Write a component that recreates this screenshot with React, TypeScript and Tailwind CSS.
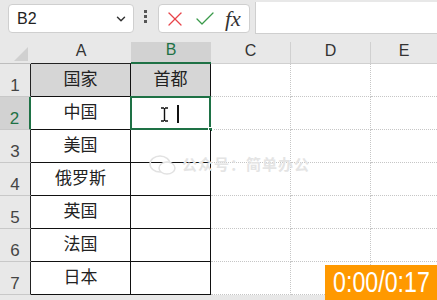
import { ChevronDown, X, Check } from "lucide-react";

const rows = [
  { n: 1, a: "国家", b: "首都", head: true },
  { n: 2, a: "中国", b: "" },
  { n: 3, a: "美国", b: "" },
  { n: 4, a: "俄罗斯", b: "" },
  { n: 5, a: "英国", b: "" },
  { n: 6, a: "法国", b: "" },
  { n: 7, a: "日本", b: "" },
];

const font = {
  fontFamily: '"Liberation Sans", "Noto Sans CJK SC", sans-serif',
};

const App = () => {
  return (
    <div
      className="relative w-[437px] h-[300px] overflow-hidden bg-[#e8e8e8] text-[#222]"
      style={font}
    >
      {/* formula bar */}
      <div className="flex h-[42px] items-start">
        <div className="ml-[8px] mt-[4px] flex h-[29px] w-[126px] items-center justify-between rounded-[4px] border border-[#cfcfcf] bg-white pl-[8px] pr-[5px]">
          <span className="text-[16px]">B2</span>
          <ChevronDown size={14} strokeWidth={2.5} className="text-[#333]" />
        </div>
        <div className="mt-[10px] ml-[10px] flex flex-col gap-[2px]">
          <div className="h-[3px] w-[3px] bg-[#555]" />
          <div className="h-[3px] w-[3px] bg-[#555]" />
          <div className="h-[3px] w-[3px] bg-[#555]" />
        </div>
        <div className="ml-[11px] mt-[4px] flex h-[29px] w-[92px] items-center gap-[6px] rounded-[4px] border border-[#cfcfcf] bg-white pl-[4px]">
          <X size={24} strokeWidth={1.3} className="text-[#e8444a]" />
          <Check size={24} strokeWidth={1.3} className="text-[#3a9a4a]" />
          <span
            className="ml-[2px] text-[22px] italic text-[#333]"
            style={{ fontFamily: '"Liberation Serif", serif' }}
          >
            fx
          </span>
        </div>
        <div className="ml-[5px] mt-[2px] h-[32px] flex-1 border-l border-b border-[#cfcfcf] bg-white" />
      </div>

      {/* column headers */}
      <div className="flex h-[22px]">
        <div className="relative w-[31px] border-b border-[#bdbdbd]">
          <svg className="absolute right-[3px] bottom-[2px]" width="14" height="14" viewBox="0 0 14 14">
            <polygon points="14,0 14,14 0,14" fill="#d0d0d0" />
          </svg>
        </div>
        <div className="flex w-[100px] items-end justify-center border-b border-[#222] text-[16px] text-[#333]">
          A
        </div>
        <div className="flex w-[80px] items-end justify-center border-b-2 border-[#1e7145] bg-[#d2d2d2] text-[16px] text-[#1e7145]">
          B
        </div>
        <div className="flex w-[80px] items-end justify-center border-r border-b border-[#d0d0d0] text-[16px] text-[#333]">
          C
        </div>
        <div className="flex w-[80px] items-end justify-center border-r border-b border-[#d0d0d0] text-[16px] text-[#333]">
          D
        </div>
        <div className="flex flex-1 items-end justify-center border-b border-[#d0d0d0] text-[16px] text-[#333]">
          E
        </div>
      </div>

      {/* rows */}
      {rows.map((r) => (
        <div key={r.n} className="flex h-[33px]">
          <div
            className={`flex w-[31px] items-end justify-center border-b border-[#c8c8c8] text-[17px] leading-[20px] ${
              r.n === 2
                ? "border-r-2 border-r-[#1e7145] bg-[#d2d2d2] text-[#1e7145]"
                : "border-r border-r-[#222] text-[#444]"
            }`}
          >
            {r.n}
          </div>
          <div
            className={`flex w-[100px] items-center justify-center border-r border-b border-[#111] text-[17px] ${
              r.head ? "bg-[#d6d6d6]" : "bg-white"
            }`}
          >
            {r.a}
          </div>
          <div
            className={`relative flex w-[80px] items-center justify-center border-r border-b border-[#111] text-[17px] ${
              r.head ? "bg-[#d6d6d6]" : "bg-white"
            }`}
          >
            {r.b}
            {r.n === 2 && (
              <>
                <div className="absolute -left-[1px] -top-[1px] -right-[1px] -bottom-[1px] border-2 border-[#1e7145]" />
                <div className="absolute -right-[3px] -bottom-[3px] h-[5px] w-[5px] border border-white bg-[#1e7145]" />
                <svg className="absolute left-[29px] top-[10px]" width="9" height="15" viewBox="0 0 9 15">
                  <path d="M1 1h3M5 1h3M4.5 1v13M1 14h3M5 14h3" stroke="#111" strokeWidth="1.4" fill="none" />
                </svg>
                <div className="absolute left-[46px] top-[8px] h-[18px] w-[1.5px] bg-[#111]" />
              </>
            )}
          </div>
          <div className="w-[80px] border-r border-b border-dotted border-[#c6c6c6] bg-white" />
          <div className="w-[80px] border-r border-b border-dotted border-[#c6c6c6] bg-white" />
          <div className="flex-1 border-b border-dotted border-[#c6c6c6] bg-white" />
        </div>
      ))}

      {/* watermark */}
      <div className="absolute left-[148px] top-[153px] flex items-center gap-[4px] text-[#e4e4e4]">
        <svg width="30" height="24" viewBox="0 0 30 24">
          <ellipse cx="12" cy="11" rx="10" ry="8" fill="none" stroke="#e2e2e2" strokeWidth="1.5" />
          <ellipse cx="19" cy="15" rx="8" ry="6" fill="white" stroke="#e2e2e2" strokeWidth="1.5" />
        </svg>
        <span className="text-[15px] font-bold tracking-[1px]">公众号：简单办公</span>
      </div>

      {/* video timer */}
      <div className="absolute right-0 bottom-0 flex h-[35px] w-[112px] items-center justify-center overflow-hidden bg-[#ff9900] text-white">
        <span className="inline-block scale-x-[0.8] text-[29px] leading-none whitespace-nowrap">
          0:00/0:17
        </span>
      </div>
    </div>
  );
};

export default App;
